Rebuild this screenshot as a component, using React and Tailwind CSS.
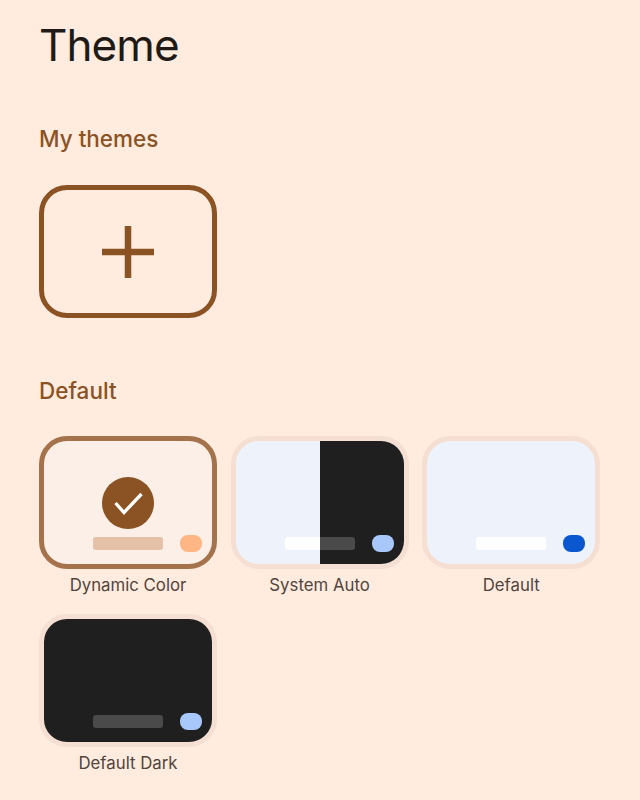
const BAR_POS = "absolute left-[49px] top-[96px] h-[13px] w-[70px] rounded-[3px]";
const DOT_POS = "absolute left-[136px] top-[94px] h-[17px] w-[22px] rounded-[8px]";

function Check() {
  return (
    <div className="absolute left-[58px] top-[36px] flex h-[52px] w-[52px] items-center justify-center rounded-full bg-[#8b5223]">
      <svg width="32" height="32" viewBox="0 0 32 32" fill="none">
        <path d="M3.5 16 L12 25.5 L29.5 7" stroke="#ffffff" strokeWidth="3.3" />
      </svg>
    </div>
  );
}

function ThemeCard({ label, border, children }) {
  return (
    <div className="flex flex-col items-center">
      <div className={`relative h-[133px] w-[178px] overflow-hidden rounded-[28px] border-[5px] ${border}`}>
        {children}
      </div>
      <div className="mt-[6px] text-[16.8px] leading-[20px] text-[#52443c]">{label}</div>
    </div>
  );
}

export default function App() {
  return (
    <div className="h-[800px] w-[640px] overflow-hidden bg-[#ffecdf] pl-[39px] font-['Inter',sans-serif]">
      <h1 className="pt-[14px] text-[44px] leading-[62px] font-normal tracking-[-0.9px] text-[#201a17]">Theme</h1>
      <h2 className="mt-[48px] text-[22.5px] leading-[30px] font-medium text-[#8b5223]">My themes</h2>
      <button className="mt-[31px] flex h-[133px] w-[178px] items-center justify-center rounded-[28px] border-[5px] border-[#8b5223]">
        <svg width="54" height="54" viewBox="0 0 54 54" fill="none">
          <path d="M27 1 V53 M1 27 H53" stroke="#8b5223" strokeWidth="6.5" />
        </svg>
      </button>
      <h2 className="mt-[58px] text-[22.5px] leading-[30px] font-medium text-[#8b5223]">Default</h2>
      <div className="mt-[30px] grid grid-cols-[178px_178px_178px] gap-x-[13.6px] gap-y-[18.5px]">
        <ThemeCard label="Dynamic Color" border="border-[#a4734c] bg-[#fbefe8]">
          <Check />
          <div className={`${BAR_POS} bg-[#e5c1a8]`} />
          <div className={`${DOT_POS} bg-[#ffb685]`} />
        </ThemeCard>
        <ThemeCard label="System Auto" border="border-[#f5ded2] bg-[#eef3fb]">
          <div className="flex h-full">
            <div className="w-1/2 bg-[#eef3fb]" />
            <div className="w-1/2 bg-[#1f1f1f]" />
          </div>
          <div className={`${BAR_POS} flex overflow-hidden`}>
            <div className="w-1/2 bg-white" />
            <div className="w-1/2 bg-[#4a4a4a]" />
          </div>
          <div className={`${DOT_POS} bg-[#a8c7fa]`} />
        </ThemeCard>
        <ThemeCard label="Default" border="border-[#f5ded2] bg-[#eef3fb]">
          <div className={`${BAR_POS} bg-white`} />
          <div className={`${DOT_POS} bg-[#0b57d0]`} />
        </ThemeCard>
        <ThemeCard label="Default Dark" border="border-[#f5ded2] bg-[#1f1f1f]">
          <div className={`${BAR_POS} bg-[#4a4a4a]`} />
          <div className={`${DOT_POS} bg-[#a8c7fa]`} />
        </ThemeCard>
      </div>
    </div>
  );
}
